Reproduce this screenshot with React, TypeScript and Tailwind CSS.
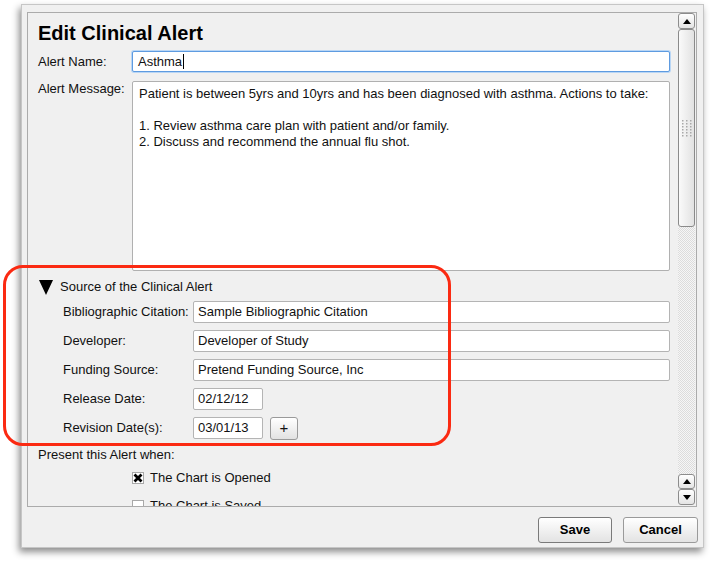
import React from 'react';

const font = { fontFamily: '"Liberation Sans", Arial, sans-serif' };

const ArrowBtn: React.FC<{ dir: 'up' | 'down'; h: string }> = ({ dir, h }) => (
  <div
    className={`${h} w-[17px] shrink-0 flex items-center justify-center border border-[#8c8c8c] rounded-[3px] bg-gradient-to-b from-[#ffffff] to-[#e4e4e4]`}
  >
    <svg width="8" height="5" viewBox="0 0 8 5">
      {dir === 'up' ? <polygon points="4,0 8,5 0,5" fill="#000" /> : <polygon points="0,0 8,0 4,5" fill="#000" />}
    </svg>
  </div>
);

const Field: React.FC<{ label: string; value: string; short?: boolean; plus?: boolean }> = ({ label, value, short, plus }) => (
  <div className="flex items-center h-[22px]">
    <div className="w-[130px] shrink-0">{label}</div>
    <div
      className={`${short ? 'w-[70px]' : 'flex-1'} h-[22px] bg-white border border-[#b4b4b4] rounded-[2px] px-[4px] flex items-center`}
    >
      {value}
    </div>
    {plus && (
      <div className="ml-[7px] w-[28px] h-[23px] flex items-center justify-center border border-[#9a9a9a] rounded-[3px] bg-gradient-to-b from-[#ffffff] to-[#e2e2e2] text-[15px]">
        +
      </div>
    )}
  </div>
);

const Check: React.FC<{ checked?: boolean }> = ({ checked }) => (
  <div className="w-[12px] h-[12px] shrink-0 bg-white border border-[#a8a8a8] flex items-center justify-center">
    {checked && (
      <svg width="10" height="10" viewBox="0 0 10 10">
        <path d="M1.5 1.5 L8.5 8.5 M8.5 1.5 L1.5 8.5" stroke="#000" strokeWidth="2.8" />
      </svg>
    )}
  </div>
);

export default function App() {
  return (
    <div className="relative w-[712px] h-[561px] bg-white pt-[4px] pl-[21px] text-[13px] text-[#111]" style={font}>
      <div className="w-[683px] h-[544px] bg-[#f0f0f0] border border-[#c6c6c6] shadow-[-2px_4px_7px_rgba(0,0,0,0.45)] pt-[7px] px-[5px] flex flex-col">
        <div className="w-[670px] h-[495px] border border-[#ababab] flex">
          <div className="flex-1 overflow-hidden pl-[10px] pr-[8px] pt-[8px]">
            <div className="h-[24px] leading-[24px] text-[20px] font-bold text-black">Edit Clinical Alert</div>

            <div className="mt-[6px] flex items-center h-[21px]">
              <div className="w-[94px] shrink-0">Alert Name:</div>
              <div className="flex-1 h-[21px] bg-white border border-[#5e9be0] shadow-[0_0_0_1px_#b9d6f5] rounded-[2px] px-[5px] flex items-center">
                Asthma<span className="inline-block w-[1px] h-[15px] bg-black ml-[1px]" />
              </div>
            </div>

            <div className="mt-[9px] flex">
              <div className="w-[94px] shrink-0 leading-[16px]">Alert Message:</div>
              <div className="flex-1 h-[190px] bg-white border border-[#b0b0b0] rounded-[2px] pl-[6px] pt-[4px] leading-[16px]">
                <div>Patient is between 5yrs and 10yrs and has been diagnosed with asthma. Actions to take:</div>
                <div className="h-[16px]" />
                <div>1. Review asthma care plan with patient and/or family.</div>
                <div>2. Discuss and recommend the annual flu shot.</div>
              </div>
            </div>

            <div className="mt-[8px] h-[16px] flex items-center pl-[1px]">
              <svg width="14" height="15" viewBox="0 0 14 15">
                <polygon points="0,0 14,0 7,15" fill="#000" />
              </svg>
              <span className="ml-[7px]">Source of the Clinical Alert</span>
            </div>

            <div className="mt-[6px] pl-[25px] flex flex-col gap-[7px]">
              <Field label="Bibliographic Citation:" value="Sample Bibliographic Citation" />
              <Field label="Developer:" value="Developer of Study" />
              <Field label="Funding Source:" value="Pretend Funding Source, Inc" />
              <Field label="Release Date:" value="02/12/12" short />
              <Field label="Revision Date(s):" value="03/01/13" short plus />
            </div>

            <div className="mt-[8px] h-[16px] leading-[16px]">Present this Alert when:</div>
            <div className="mt-[7px] h-[16px] flex items-center pl-[94px]">
              <Check checked />
              <span className="ml-[6px]">The Chart is Opened</span>
            </div>
            <div className="mt-[12px] h-[16px] flex items-center pl-[94px]">
              <Check />
              <span className="ml-[6px]">The Chart is Saved</span>
            </div>
          </div>

          <div className="w-[17px] mr-[1px] flex flex-col pb-[1px]">
            <ArrowBtn dir="up" h="h-[16px]" />
            <div className="h-[198px] shrink-0 border border-[#8a8a8a] rounded-[3px] bg-gradient-to-r from-[#fafafa] to-[#e2e2e2] flex items-center justify-center">
              <svg width="10" height="17" viewBox="0 0 10 17">
                {[0, 1, 2, 3, 4, 5].map((r) =>
                  [0, 1, 2].map((c) => (
                    <rect key={`${r}-${c}`} x={c * 4} y={r * 3} width="1.5" height="1.5" fill="#a8a8a8" />
                  ))
                )}
              </svg>
            </div>
            <div className="flex-1 bg-[repeating-conic-gradient(#dcdcdc_0%_25%,#f6f6f6_0%_50%)] bg-[length:2px_2px]" />
            <ArrowBtn dir="up" h="h-[15px]" />
            <ArrowBtn dir="down" h="h-[16px]" />
          </div>
        </div>

        <div className="mt-[10px] flex justify-end gap-[11px]">
          <div className="w-[74px] h-[26px] flex items-center justify-center border border-[#7a7a7a] rounded-[3px] bg-gradient-to-b from-[#ffffff] to-[#e3e3e3] font-bold text-black">
            Save
          </div>
          <div className="w-[75px] h-[26px] flex items-center justify-center border border-[#9a9a9a] rounded-[3px] bg-gradient-to-b from-[#ffffff] to-[#e3e3e3] font-bold text-black">
            Cancel
          </div>
        </div>
      </div>

      <div className="absolute left-[3px] top-[265px] w-[448px] h-[181px] border-[3px] border-[#fb2a12] rounded-[20px] pointer-events-none" />
    </div>
  );
}
